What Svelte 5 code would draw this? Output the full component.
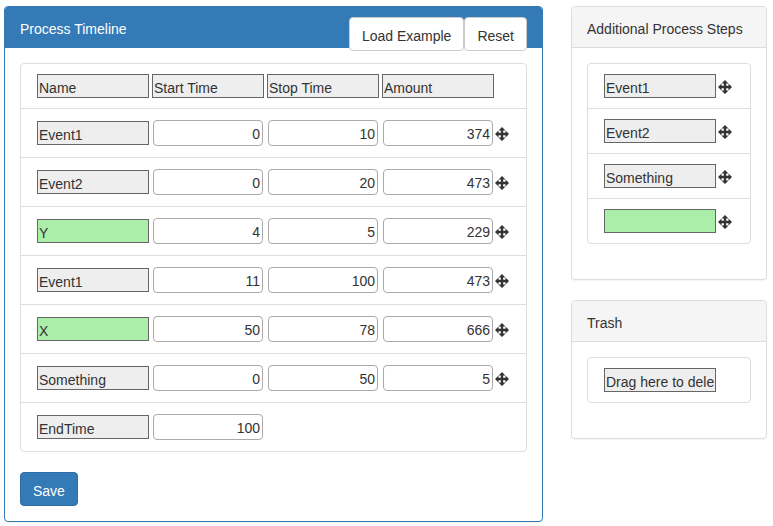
<script>
  const columns = ['Name', 'Start Time', 'Stop Time', 'Amount'];

  const example = [
    { name: 'Event1', start: 0, stop: 10, amount: 374 },
    { name: 'Event2', start: 0, stop: 20, amount: 473 },
    { name: 'Y', start: 4, stop: 5, amount: 229, custom: true },
    { name: 'Event1', start: 11, stop: 100, amount: 473 },
    { name: 'X', start: 50, stop: 78, amount: 666, custom: true },
    { name: 'Something', start: 0, stop: 50, amount: 5 }
  ];

  const copyExample = () => example.map((event) => ({ ...event }));

  let events = $state(copyExample());
  let endTime = $state(100);
  let steps = $state([
    { name: 'Event1' },
    { name: 'Event2' },
    { name: 'Something' },
    { name: '', custom: true }
  ]);

  function loadExample() {
    events = copyExample();
    endTime = 100;
  }

  function reset() {
    events = [];
    endTime = 0;
  }
</script>

{#snippet moveIcon()}
  <svg class="move" viewBox="0 0 1200 1200" aria-hidden="true">
    <path d="M600 0 L900 300 H700 V500 H900 V300 L1200 600 L900 900 V700 H700 V900 H900 L600 1200 L300 900 H500 V700 H300 V900 L0 600 L300 300 V500 H500 V300 H300 Z" />
  </svg>
{/snippet}

<div class="layout">
  <main class="panel primary">
    <header class="heading">
      <span>Process Timeline</span>
      <div class="actions">
        <button type="button" class="btn" onclick={loadExample}>Load Example</button>
        <button type="button" class="btn" onclick={reset}>Reset</button>
      </div>
    </header>
    <form class="body" onsubmit={(e) => e.preventDefault()}>
      <table class="list timeline">
        <thead>
          <tr class="row">
            {#each columns as column}
              <th class="box" scope="col">{column}</th>
            {/each}
          </tr>
        </thead>
        <tbody>
          {#each events as event}
            <tr class="row">
              <td><input class="box" class:custom={event.custom} readonly={!event.custom} aria-label="Name" bind:value={event.name} /></td>
              <td><input class="number" type="number" aria-label="Start Time" bind:value={event.start} /></td>
              <td><input class="number" type="number" aria-label="Stop Time" bind:value={event.stop} /></td>
              <td><input class="number" type="number" aria-label="Amount" bind:value={event.amount} /></td>
              <td>{@render moveIcon()}</td>
            </tr>
          {/each}
          <tr class="row">
            <td><label class="box" for="end-time">EndTime</label></td>
            <td><input class="number" id="end-time" type="number" bind:value={endTime} /></td>
          </tr>
        </tbody>
      </table>
      <button type="submit" class="btn save">Save</button>
    </form>
  </main>

  <aside>
    <section class="panel">
      <header class="heading">Additional Process Steps</header>
      <div class="body">
        <ul class="list">
          {#each steps as step}
            <li class="row">
              <input class="box" class:custom={step.custom} readonly={!step.custom} aria-label="Step name" bind:value={step.name} />
              {@render moveIcon()}
            </li>
          {/each}
        </ul>
      </div>
    </section>
    <section class="panel">
      <header class="heading">Trash</header>
      <div class="body">
        <ul class="list">
          <li class="row"><input class="box" readonly aria-label="Trash" value="Drag here to delete" /></li>
        </ul>
      </div>
    </section>
  </aside>
</div>

<style>
  :global(body) {
    margin: 0;
    background: #fff;
  }

  .layout,
  .layout * {
    box-sizing: border-box;
  }

  .layout {
    display: grid;
    grid-template-columns: minmax(0, 11fr) minmax(0, 4fr);
    align-items: start;
    gap: 28px;
    padding: 6px 6px 4px 4px;
    font: 14px/20px "Liberation Sans", Arial, sans-serif;
    color: #333;
  }

  aside {
    display: grid;
    gap: 20px;
  }

  .panel {
    border: 1px solid #ddd;
    border-radius: 4px;
    background: #fff;
    box-shadow: 0 1px 1px rgba(0, 0, 0, 0.05);
  }

  .heading {
    display: flex;
    justify-content: space-between;
    align-items: flex-start;
    padding: 12px 15px 8px;
    border-bottom: 1px solid #ddd;
    border-radius: 3px 3px 0 0;
    background: #f5f5f5;
  }

  .primary,
  .primary .heading {
    border-color: #337ab7;
  }

  .primary .heading {
    background: #337ab7;
    color: #fff;
  }

  /* The buttons hang over the lower edge of the heading. */
  .actions {
    display: flex;
    margin: -2px 0 -12px;
  }

  .body {
    padding: 15px;
  }

  .btn {
    padding: 8px 12px 4px;
    border: 1px solid #ccc;
    border-radius: 4px;
    background: #fff;
    color: #333;
    font: inherit;
    cursor: pointer;
  }

  .save {
    border-color: #2e6da4;
    background: #337ab7;
    color: #fff;
  }

  .list {
    display: block;
    margin: 0 0 20px;
    padding: 0;
    border: 1px solid #ddd;
    border-radius: 4px;
    list-style: none;
  }

  thead,
  tbody {
    display: block;
  }

  .row {
    display: flex;
    align-items: center;
    gap: 3px;
    padding: 10px 16px;
  }

  .row + .row,
  tbody .row {
    border-top: 1px solid #ddd;
  }

  td {
    display: flex;
    padding: 0;
  }

  .box {
    display: block;
    width: 112px;
    height: 24px;
    margin: 0;
    padding: 3px 1px 0;
    border: 1px solid #666;
    border-radius: 0;
    background: #eee;
    color: inherit;
    font: inherit;
    font-weight: normal;
    text-align: left;
  }

  .custom {
    background: #aea;
  }

  .number {
    width: 110px;
    height: 26px;
    margin: 1px;
    padding: 2px 2px 0;
    border: 1px solid #aaa;
    border-radius: 4px;
    background: #fff;
    color: inherit;
    font: inherit;
    text-align: right;
    appearance: textfield;
  }

  .number::-webkit-inner-spin-button {
    appearance: none;
    margin: 0;
  }

  .move {
    display: block;
    width: 14px;
    height: 14px;
    margin: 2px 0 0 -1px;
    fill: #333;
    cursor: move;
  }

  .timeline .move {
    margin-left: -2px;
  }
</style>
